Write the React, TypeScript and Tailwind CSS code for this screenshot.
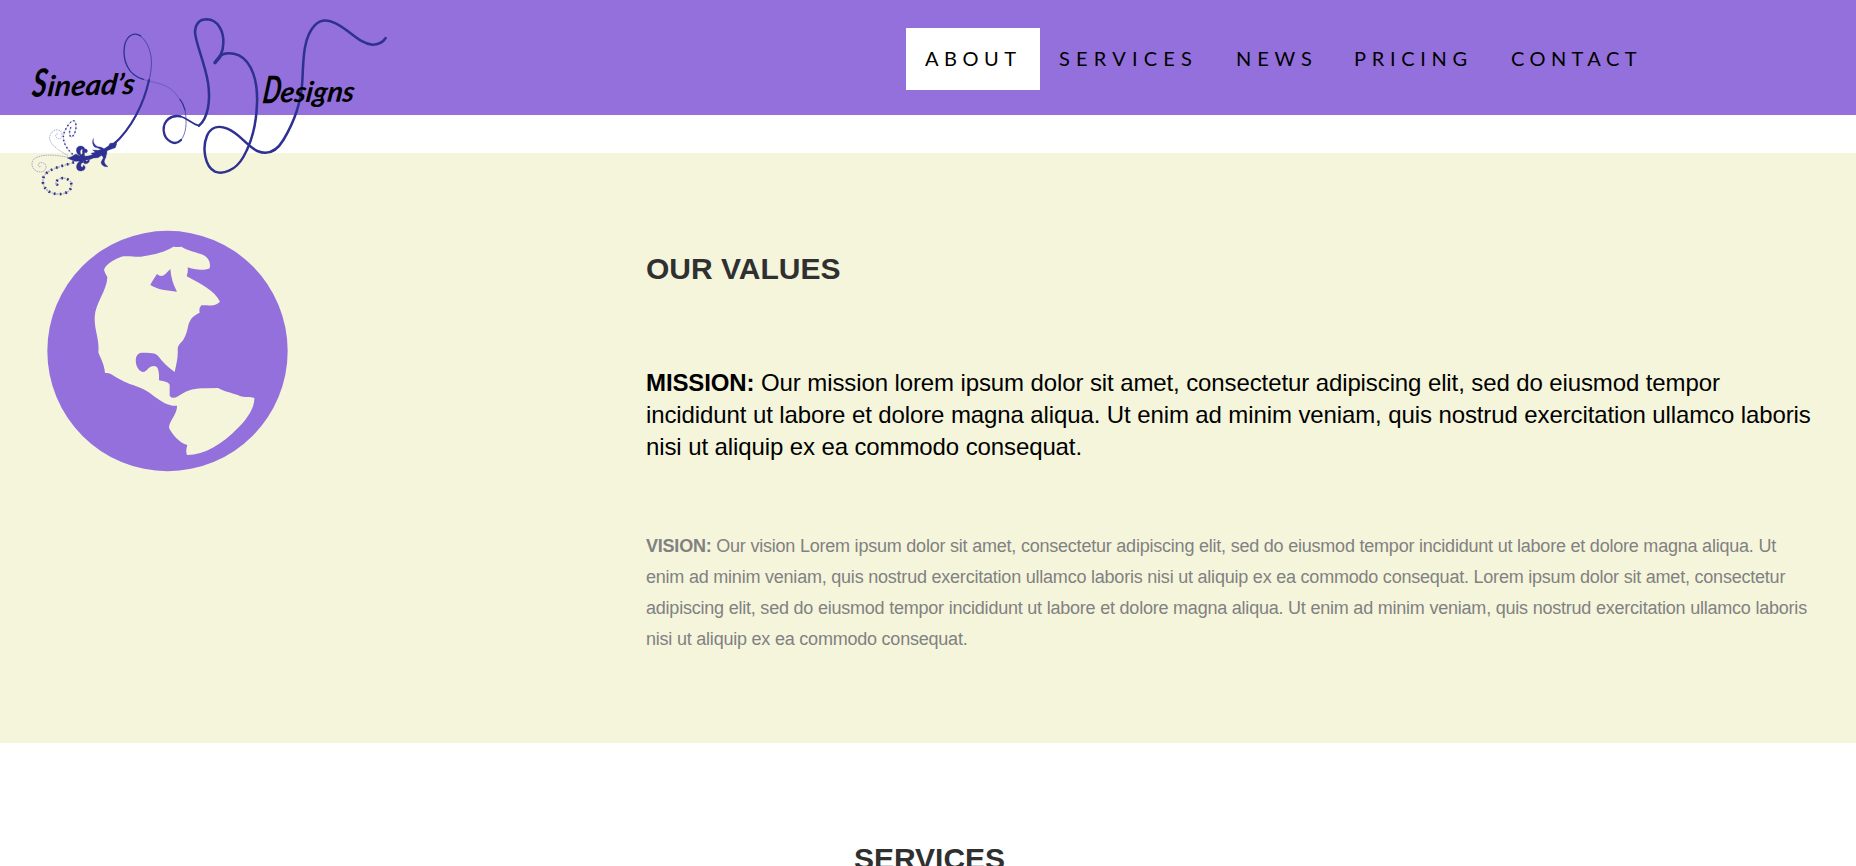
import React from "react";

const INK = "#2e3192";

const navItems = [
  { label: "ABOUT", cls: "w-[134px] bg-white tracking-[5.5px]" },
  { label: "SERVICES", cls: "w-[177px] tracking-[6.2px]" },
  { label: "NEWS", cls: "w-[118px] tracking-[5.9px]" },
  { label: "PRICING", cls: "w-[157px] tracking-[5.7px]" },
  { label: "CONTACT", cls: "w-[167px] tracking-[5.4px]" },
];

function Logo() {
  return (
    <svg
      className="absolute left-0 top-0 h-[210px] w-[400px]"
      viewBox="0 0 1200 630"
      fill="none"
      stroke={INK}
      strokeLinecap="round"
      strokeLinejoin="round"
    >
      {/* flower stem and its loop */}
      <path d="M447 240C432 310 395 385 340 434" strokeWidth="6.5" />
      <path d="M447 242C463 180 452 135 422 108" strokeWidth="2.5" opacity=".8" />
      <path d="M422 108C405 96 382 103 374 135C366 180 384 226 430 238" strokeWidth="4" />
      <path d="M430 238C470 252 512 248 540 300" strokeWidth="2" opacity=".5" />
      <path d="M540 298C548 308 552 318 555 330" strokeWidth="3.5" />
      <path d="M555 330C562 370 558 402 543 420" strokeWidth="2.5" opacity=".8" />
      {/* letter B */}
      <path
        d="M543 420C524 440 494 422 491 392C489 361 514 344 541 349"
        strokeWidth="7"
      />
      <path d="M541 349C561 354 580 374 597 377" strokeWidth="5" />
      <path
        d="M597 377C625 353 632 300 624 248C615 190 586 128 585 96C587 68 601 58 620 58C654 59 672 94 670 130C669 157 660 170 645 188"
        strokeWidth="7.5"
      />
      <path d="M645 188L660 170" strokeWidth="10" />
      <path
        d="M660 168C672 157 696 157 717 166C756 185 774 246 771 310C769 374 753 431 730 471C706 513 668 524 645 515C614 500 606 443 621 407C632 382 655 375 682 386C718 400 741 438 772 453C803 466 829 455 850 420C878 374 903 310 907 245C910 176 910 112 944 76C960 60 983 58 1007 70C1051 92 1081 132 1117 134C1138 134 1149 127 1157 114"
        strokeWidth="7.5"
      />
      {/* blossom */}
      <g fill={INK} strokeWidth="1">
        <path d="M326 437L330 430L341 429L347 423L350 432L346 443L335 447L321 452L320 464L305 466L294 473L281 474L268 479L252 481L247 489L238 484L224 484L213 479L202 474L214 470L228 462L239 468L249 460L252 469L264 468L278 464L273 460L286 457L278 450L295 451L301 449L310 448Z" />
        <path d="M280 416Q277 432 293 440Q306 439 319 452L307 455Q299 443 285 442Q273 431 280 416Z" />
        <path d="M311 458Q324 464 315 477Q308 489 324 500Q306 502 303 487L310 473L304 464Z" />
        <path d="M243 469C223 460 226 438 242 438C254 438 259 450 248 456C252 443 239 446 241 459C242 465 246 465 250 470Z" />
        <path d="M251 467C244 455 248 446 257 447C266 449 262 461 257 458C253 456 252 461 255 470Z" />
        <path d="M243 482C225 489 225 512 242 513C256 513 260 500 250 495C250 506 240 502 243 492C246 488 249 486 252 480Z" />
        <path d="M253 480C246 489 254 494 263 490C270 485 270 478 264 481C261 485 257 485 257 479Z" />
      </g>
      {/* beaded tendrils */}
      <g strokeLinecap="butt">
        <path d="M218 463C190 438 184 410 196 390C205 372 222 350 227 370C231 390 221 410 214 411C207 410 207 389 214 380" strokeWidth="3" opacity=".3" />
        <path d="M218 463C190 438 184 410 196 390C205 372 222 350 227 370C231 390 221 410 214 411C207 410 207 389 214 380" strokeWidth="4.5" strokeDasharray="4 8" />
        <path d="M204 466C160 445 142 421 151 404C158 388 178 384 185 398C191 416 176 420 171 414C163 408 168 400 174 402" strokeWidth="3" opacity=".35" strokeDasharray="5 2" />
        <path d="M204 472C166 464 118 460 99 480C87 503 113 524 132 513C148 497 130 483 118 489C110 496 118 505 124 498" strokeWidth="3" opacity=".35" strokeDasharray="5 2" />
        <path d="M222 487C180 500 145 507 132 528C121 554 138 578 169 582C199 585 220 569 213 548C205 532 178 529 169 545C165 553 169 558 175 551" strokeWidth="5" opacity=".3" strokeDasharray="8 3" />
        <path d="M222 487C180 500 145 507 132 528C121 554 138 578 169 582C199 585 220 569 213 548C205 532 178 529 169 545C165 553 169 558 175 551" strokeWidth="8" strokeDasharray="5 12" />
      </g>
      <g fill="#000" stroke="none" fontFamily="Lato, sans-serif" fontStyle="italic" fontWeight="700">
        <g transform="translate(94 290) rotate(-1.5) skewX(-8)">
          <text fontSize="116" textLength="44" lengthAdjust="spacingAndGlyphs">S</text>
          <text x="46" fontSize="86" textLength="262" lengthAdjust="spacingAndGlyphs">inead’s</text>
        </g>
        <g transform="translate(785 310) rotate(-0.5) skewX(-8)">
          <text fontSize="114" textLength="54" lengthAdjust="spacingAndGlyphs">D</text>
          <text x="53" y="-3" fontSize="86" textLength="222" lengthAdjust="spacingAndGlyphs">esigns</text>
        </g>
      </g>
    </svg>
  );
}

function Globe() {
  return (
    <svg className="h-[270px] w-[280px]" viewBox="0 0 840 810">
      <circle cx="412.5" cy="408" r="360.5" fill="#9370db" />
      <g fill="#f5f5dc">
        <path d="M222 165C226 148 260 128 280 124C300 122 312 126 332 125C370 119 404 112 430 95Q442 97 454 95C475 108 500 111 520 120C538 130 542 144 539 160C520 168 492 164 473 157Q475 170 470 184C512 206 552 226 570 260C552 277 532 270 514 271Q506 280 509 293C487 303 479 315 475 331C471 350 468 361 460 374C453 384 444 388 443 402C445 426 439 447 434 471C413 457 398 441 385 424C379 412 356 414 335 413C315 415 314 440 322 457C334 479 347 471 356 459C366 451 378 450 383 460C388 474 387 484 387 496C404 499 417 502 419 510L419 542Q427 554 444 544C480 521 491 521 530 520L564 519C588 532 613 535 630 543C642 548 660 544 673 549C674 578 653 609 626 637C575 689 525 720 471 720Q466 709 472 690C449 685 424 655 417 638C418 617 443 596 441 572C416 574 397 561 374 545C344 522 337 520 309 510C253 491 248 472 225 474C223 447 212 432 205 412C209 370 193 350 194 306C196 264 231 227 232 187Q225 175 222 165Z" />
      </g>
      <path d="M381 177Q394 189 407 176L421 162Q424 200 441 230C412 227 382 224 361 210C366 198 374 189 381 177Z" fill="#9370db" />
    </svg>
  );
}

export default function App() {
  return (
    <div className="h-[866px] overflow-hidden bg-white font-['Liberation_Sans',Arial,sans-serif]">
      <header className="relative flex h-[115px] items-start justify-end bg-[#9370db] pr-[197px] pt-7">
        <Logo />
        <nav className="flex h-[62px] font-['Lato',sans-serif] text-xl text-black">
          {navItems.map((item) => (
            <a key={item.label} href="#" className={`flex items-center whitespace-nowrap pb-0.5 pl-[19px] ${item.cls}`}>
              {item.label}
            </a>
          ))}
        </nav>
      </header>

      <section className="mt-[38px] flex h-[590px] bg-[#f5f5dc]">
        <div className="w-[646px] shrink-0 pl-[30px] pt-[62px]">
          <Globe />
        </div>
        <div className="pt-[97px]">
          <h2 className="text-[30px] font-bold leading-[38px] text-[#303030]">OUR VALUES</h2>
          <p className="mt-[79px] whitespace-nowrap text-2xl leading-8 tracking-[-0.107px] text-black">
            <strong>MISSION:</strong> Our mission lorem ipsum dolor sit amet, consectetur adipiscing elit, sed do eiusmod tempor
            <br />
            incididunt ut labore et dolore magna aliqua. Ut enim ad minim veniam, quis nostrud exercitation ullamco laboris
            <br />
            nisi ut aliquip ex ea commodo consequat.
          </p>
          <p className="mt-[68px] whitespace-nowrap text-lg leading-[31px] tracking-[-0.218px] text-[#818181]">
            <strong>VISION:</strong> Our vision Lorem ipsum dolor sit amet, consectetur adipiscing elit, sed do eiusmod tempor incididunt ut labore et dolore magna aliqua. Ut
            <br />
            enim ad minim veniam, quis nostrud exercitation ullamco laboris nisi ut aliquip ex ea commodo consequat. Lorem ipsum dolor sit amet, consectetur
            <br />
            adipiscing elit, sed do eiusmod tempor incididunt ut labore et dolore magna aliqua. Ut enim ad minim veniam, quis nostrud exercitation ullamco laboris
            <br />
            nisi ut aliquip ex ea commodo consequat.
          </p>
        </div>
      </section>

      <section className="pl-[3px] pt-[97px] text-center">
        <h2 className="text-[30px] font-bold leading-[38px] text-[#303030]">SERVICES</h2>
      </section>
    </div>
  );
}
